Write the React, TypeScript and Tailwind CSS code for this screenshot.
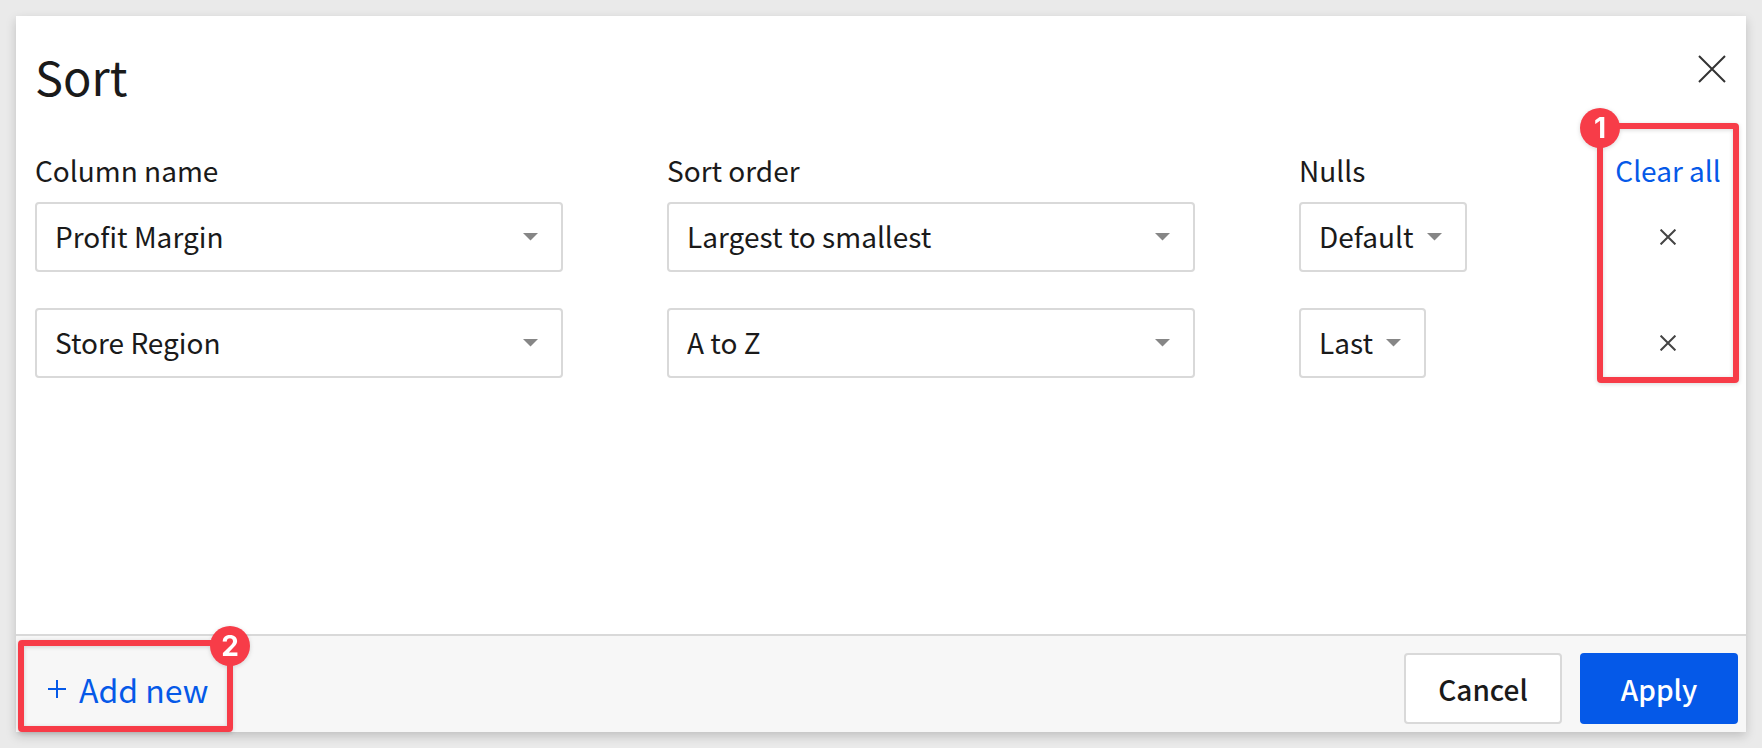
import { useState } from 'react';
import type { ReactNode } from 'react';
import clsx from 'clsx';

interface SortRule {
  id: number;
  column: string;
  order: string;
  nulls: string;
}

const initialRules: SortRule[] = [
  { id: 1, column: 'Profit Margin', order: 'Largest to smallest', nulls: 'Default' },
  { id: 2, column: 'Store Region', order: 'A to Z', nulls: 'Last' },
];

const columnOptions = ['Profit Margin', 'Store Region'];
const orderOptions = ['Largest to smallest', 'Smallest to largest', 'A to Z', 'Z to A'];
const nullsOptions = ['Default', 'First', 'Last'];

interface SelectProps {
  label: string;
  value: string;
  options: string[];
  onChange: (value: string) => void;
  fluid?: boolean;
}

const Select = ({ label, value, options, onChange, fluid = false }: SelectProps) => (
  <div className={clsx('relative', fluid ? 'w-full' : 'w-fit')}>
    <select
      aria-label={label}
      value={value}
      onChange={e => onChange(e.target.value)}
      className={clsx(
        'block h-[70px] appearance-none rounded-sm border-2 border-[#d9d9d9] bg-white pb-[2px] pl-[18px] pr-[51px] text-[28px] text-[#1a1a1a]',
        fluid ? 'w-full' : 'field-sizing-content'
      )}
    >
      {options.map(option => (
        <option key={option}>{option}</option>
      ))}
    </select>
    <svg viewBox="0 0 15 8" className="pointer-events-none absolute right-[25px] top-[31px] h-2 w-[15px]">
      <path d="M0 0h15L7.5 7.5z" fill="#868686" />
    </svg>
  </div>
);

const Cross = ({ className }: { className: string }) => (
  <svg viewBox="0 0 28 28" fill="none" stroke="currentColor" className={className}>
    <path d="M1 1l26 26M27 1L1 27" vectorEffect="non-scaling-stroke" />
  </svg>
);

const Badge = ({ children, className }: { children: ReactNode; className: string }) => (
  <span
    className={clsx(
      "absolute flex size-10 items-center justify-center rounded-full bg-[#f73c48] font-['Inter',sans-serif] text-[28px] leading-none font-bold text-white",
      className
    )}
  >
    {children}
  </span>
);

const callout =
  'pointer-events-none absolute rounded-sm border-6 border-[#f73c48] drop-shadow-[0_1px_2px_rgba(0,0,0,0.15)]';

const App = () => {
  const [rules, setRules] = useState<SortRule[]>(initialRules);

  const updateRule = (id: number, patch: Partial<SortRule>) => {
    setRules(rules.map(rule => (rule.id === id ? { ...rule, ...patch } : rule)));
  };

  const addRule = () => {
    setRules([...rules, { id: Date.now(), column: 'Profit Margin', order: 'A to Z', nulls: 'Default' }]);
  };

  return (
    <div className="flex min-h-screen bg-[#eaeaea] p-4 font-['Noto_Sans_CJK_SC',sans-serif] text-[28px] text-[#1a1a1a]">
      <div
        role="dialog"
        aria-labelledby="sort-title"
        className="relative flex flex-1 flex-col bg-white shadow-[0_4px_10px_rgba(0,0,0,0.18)]"
      >
        <header className="flex items-start justify-between pt-[39px] pr-5 pl-[19px]">
          <h1 id="sort-title" className="text-[47px] leading-[42px]">Sort</h1>
          <button type="button" aria-label="Close" className="text-[#333]">
            <Cross className="size-7 stroke-2" />
          </button>
        </header>

        <main className="flex-1 pt-[53px] pr-5 pl-[19px]">
          <div className="flex gap-[104px] pb-3 leading-[40px]">
            <div className="flex-1">Column name</div>
            <div className="flex-1">Sort order</div>
            <div className="flex w-[427px] justify-between">
              <span>Nulls</span>
              <button type="button" onClick={() => setRules([])} className="w-[116px] text-[#0559e8]">
                Clear all
              </button>
            </div>
          </div>

          <div className="flex flex-col gap-9">
            {rules.map(rule => (
              <div key={rule.id} className="flex gap-[104px]">
                <div className="flex-1">
                  <Select
                    fluid
                    label="Column name"
                    value={rule.column}
                    options={columnOptions}
                    onChange={column => updateRule(rule.id, { column })}
                  />
                </div>
                <div className="flex-1">
                  <Select
                    fluid
                    label="Sort order"
                    value={rule.order}
                    options={orderOptions}
                    onChange={order => updateRule(rule.id, { order })}
                  />
                </div>
                <div className="flex w-[427px] justify-between">
                  <Select
                    label="Nulls"
                    value={rule.nulls}
                    options={nullsOptions}
                    onChange={nulls => updateRule(rule.id, { nulls })}
                  />
                  <button
                    type="button"
                    aria-label="Remove"
                    onClick={() => setRules(rules.filter(r => r.id !== rule.id))}
                    className="flex w-[116px] items-center justify-center text-[#444]"
                  >
                    <Cross className="size-4 stroke-2" />
                  </button>
                </div>
              </div>
            ))}
          </div>
        </main>

        <footer className="flex items-center justify-between border-t-2 border-[#d9d9d9] bg-[#f7f7f7] pt-[17px] pr-2 pb-2 pl-8">
          <button type="button" onClick={addRule} className="flex items-center gap-[13px] text-[32px] leading-[40px] text-[#0559e8]">
            <svg viewBox="0 0 18 18" fill="none" stroke="currentColor" strokeWidth="2" className="size-[18px]">
              <path d="M9 0v18M0 9h18" />
            </svg>
            Add new
          </button>
          <div className="flex gap-[18px]">
            <button type="button" className="h-[71px] w-[158px] rounded-sm border-2 border-[#d9d9d9] bg-white font-medium">
              Cancel
            </button>
            <button type="button" className="h-[71px] w-[158px] rounded-sm bg-[#0559e8] font-medium text-white">
              Apply
            </button>
          </div>
        </footer>

        <div className={clsx(callout, 'top-[107px] right-[7px] h-[260px] w-[142px]')}>
          <Badge className="-top-[21px] -left-[23px]">1</Badge>
        </div>
        <div className={clsx(callout, 'bottom-0 left-[2px] h-[92px] w-[215px]')}>
          <Badge className="-top-[20px] -right-[23px]">2</Badge>
        </div>
      </div>
    </div>
  );
};

export default App;
